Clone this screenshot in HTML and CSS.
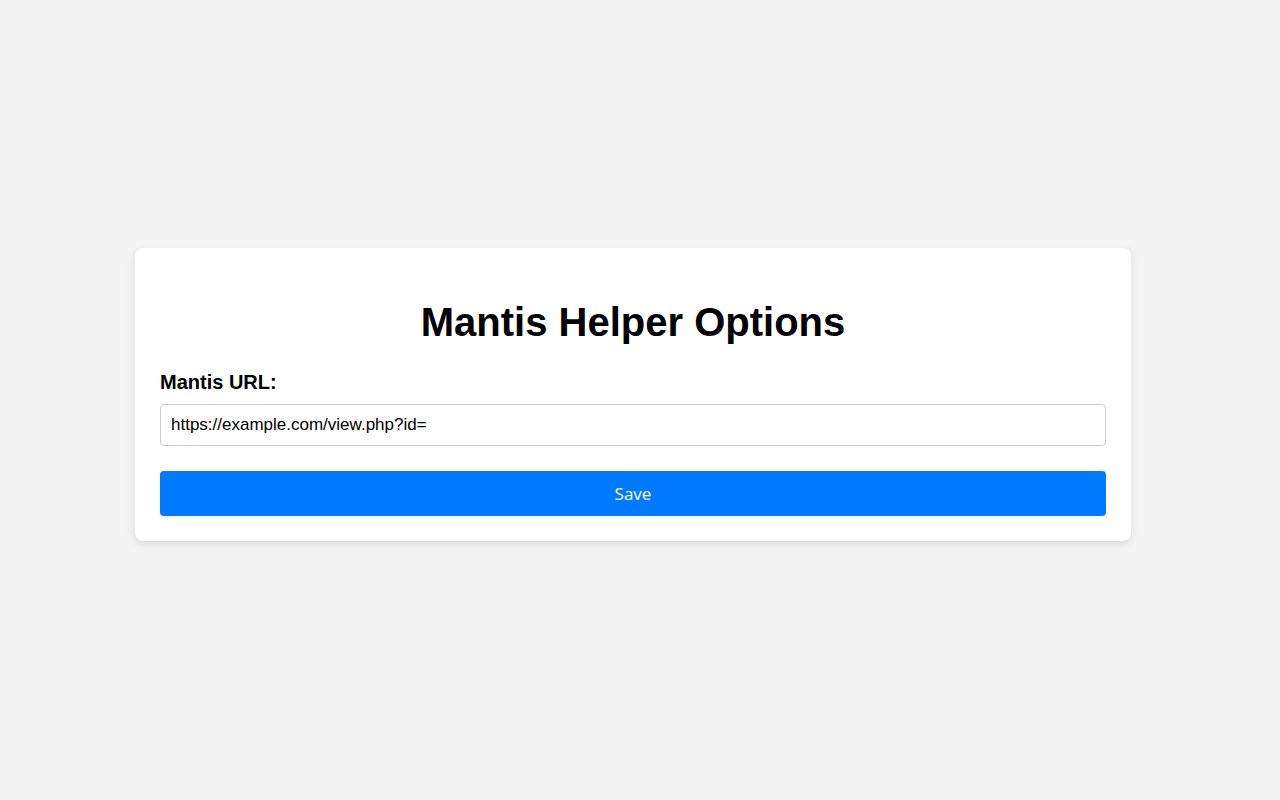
FILE: index.html
```
<!DOCTYPE html>
<html>
<head>
<meta charset="utf-8">
<link rel="stylesheet" href="styles.css">
</head>
<body>
<div class="page">
  <div class="card">
    <h1 class="title">Mantis Helper Options</h1>
    <label class="label" for="url">Mantis URL:</label>
    <input class="input" id="url" type="text" value="https://example.com/view.php?id=">
    <button class="btn">Save</button>
  </div>
</div>
</body>
</html>
```
FILE: styles.css
```
html, body {
  margin: 0;
  padding: 0;
  background: #f4f4f4;
  font-family: "Liberation Sans", Arial, sans-serif;
}
.page {
  height: 800px;
  padding-top: 248px;
  padding-left: 135px;
  box-sizing: border-box;
}
.card {
  width: 996px;
  box-sizing: border-box;
  background: #fff;
  border-radius: 8px;
  box-shadow: 0 3px 10px rgba(0,0,0,0.1);
  padding: 25px;
  display: flex;
  flex-direction: column;
}
.title {
  margin: 27px 0 0 0;
  font-size: 40px;
  font-weight: bold;
  text-align: center;
  line-height: 44px;
  color: #000;
}
.label {
  margin-top: 27px;
  font-size: 20px;
  font-weight: bold;
  line-height: 22px;
  color: #000;
}
.input {
  margin-top: 11px;
  height: 42px;
  box-sizing: border-box;
  border: 1px solid #ccc;
  border-radius: 4px;
  padding: 0 10px;
  font-family: "Liberation Sans", Arial, sans-serif;
  font-size: 17px;
  color: #000;
  outline: none;
}
.btn {
  margin-top: 25px;
  height: 45px;
  border: none;
  border-radius: 4px;
  background: #007bff;
  color: #fff;
  font-family: "Open Sans", "Liberation Sans", sans-serif;
  font-size: 17px;
  cursor: pointer;
}
```
